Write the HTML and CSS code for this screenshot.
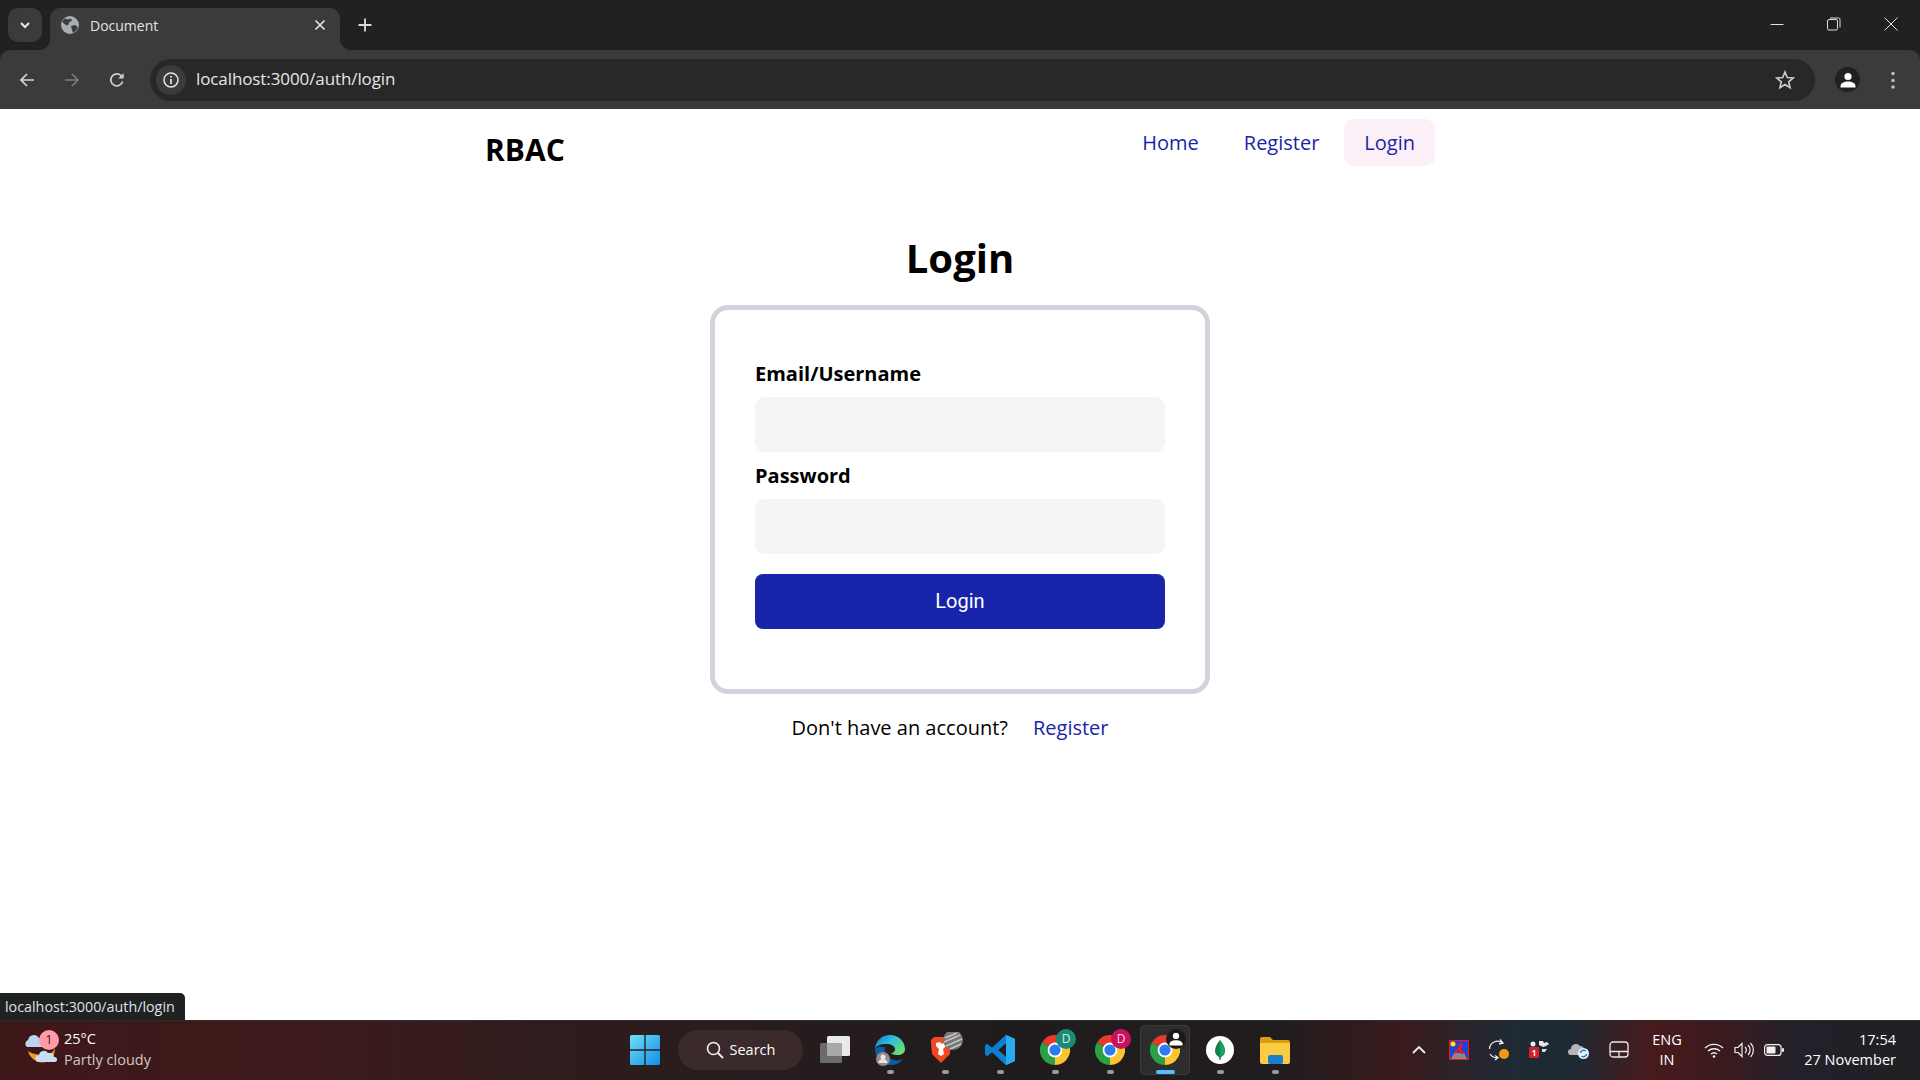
FILE: index.html
```html
<!DOCTYPE html>
<html lang="en">
<head>
<meta charset="utf-8">
<title>Document</title>
<link rel="stylesheet" href="styles.css">
</head>
<body>
<svg class="defs" width="0" height="0" aria-hidden="true">
  <defs>
    <symbol id="chrome" viewBox="0 0 30 30">
      <path d="M15 15L28 7.5A15 15 0 0 0 2 7.5Z" fill="#e8392f"/>
      <path d="M15 15L2 7.5A15 15 0 0 0 15 30Z" fill="#2c9f49"/>
      <path d="M15 15L15 30A15 15 0 0 0 28 7.5Z" fill="#fbc52d"/>
      <circle cx="15" cy="15" r="7.4" fill="#fff"/>
      <circle cx="15" cy="15" r="5.6" fill="#2a7cf0"/>
    </symbol>
  </defs>
</svg>

<div class="browser-top">
<header class="tabstrip">
  <div class="tab-menu">
    <svg width="12" height="12" viewBox="0 0 12 12"><path d="M2 4l4 4 4-4" fill="none" stroke="#e8e8e8" stroke-width="2"/></svg>
  </div>
  <div class="tab">
    <svg class="favicon" width="18" height="18" viewBox="0 0 18 18"><circle cx="9" cy="9" r="9" fill="#a8adb3"/><path d="M4 2.5l3 1 3-1 1 2-3 2-1 3-3-1-3-3zM10 10l4-1 3 2-2 4-3 2-1-3z" fill="#3b3b3b"/></svg>
    <span class="tab-title">Document</span>
    <svg class="tab-close" width="12" height="12" viewBox="0 0 12 12"><path d="M1.5 1.5l9 9M10.5 1.5l-9 9" stroke="#e8e8e8" stroke-width="1.6"/></svg>
  </div>
  <svg class="new-tab" width="14" height="14" viewBox="0 0 14 14"><path d="M7 0.5v13M0.5 7h13" stroke="#dcdcdc" stroke-width="1.8"/></svg>
  <div class="window-controls">
    <svg width="14" height="14" viewBox="0 0 14 14"><path d="M0.5 7.5h13" stroke="#e0e0e0"/></svg>
    <svg width="14" height="14" viewBox="0 0 14 14"><rect x="0.5" y="2.5" width="10" height="10.5" rx="1.5" fill="none" stroke="#e0e0e0"/><path d="M3 1h8.5a1.5 1.5 0 0 1 1.5 1.5v8" fill="none" stroke="#e0e0e0"/></svg>
    <svg width="14" height="14" viewBox="0 0 14 14"><path d="M0.5 0.5l13 13M13.5 0.5l-13 13" stroke="#e0e0e0"/></svg>
  </div>
</header>

<nav class="toolbar">
  <div class="nav-buttons">
    <svg width="16" height="16" viewBox="0 0 16 16"><path d="M15 8H2M8 2L2 8l6 6" fill="none" stroke="#d8d8d8" stroke-width="1.7"/></svg>
    <svg width="16" height="16" viewBox="0 0 16 16"><path d="M1 8h13M8 2l6 6-6 6" fill="none" stroke="#7c7c7c" stroke-width="1.7"/></svg>
    <svg width="16" height="16" viewBox="0 0 16 16"><path d="M13.6 9.5A6 6 0 1 1 12 3.6L14 5.5" fill="none" stroke="#d0d0d0" stroke-width="1.7"/><path d="M14.6 1v5.4H9.2z" fill="#d0d0d0"/></svg>
  </div>
  <div class="omnibox">
    <span class="info-chip">
      <svg width="16" height="16" viewBox="0 0 16 16"><circle cx="8" cy="8" r="7" fill="none" stroke="#e6e6e6" stroke-width="1.5"/><path d="M8 7v5" stroke="#e6e6e6" stroke-width="1.7"/><circle cx="8" cy="4.7" r="1" fill="#e6e6e6"/></svg>
    </span>
    <span class="url">localhost:3000/auth/login</span>
    <svg class="star" width="20" height="20" viewBox="0 0 20 20"><path d="M10 2l2.3 5.5 5.9.5-4.5 3.9 1.4 5.8L10 14.6l-5.1 3.1 1.4-5.8L1.800 8l5.900-.5z" fill="none" stroke="#c8c8c8" stroke-width="1.700"/></svg>
  </div>
  <span class="avatar">
    <svg width="16" height="16" viewBox="0 0 16 16"><circle cx="8" cy="4.500" r="3.600" fill="#fff"/><path d="M0.500 15.500v-1.500c0-3 3.500-4.500 7.500-4.500s7.500 1.500 7.500 4.500v1.500z" fill="#fff"/></svg>
  </span>
  <svg class="menu-dots" width="6" height="18" viewBox="0 0 6 18"><circle cx="3" cy="2.500" r="1.800" fill="#bdbdbd"/><circle cx="3" cy="9.500" r="1.800" fill="#bdbdbd"/><circle cx="3" cy="16" r="1.800" fill="#bdbdbd"/></svg>
</nav>
</div>

<main class="page">
  <div class="site-header">
    <div class="brand">RBAC</div>
    <ul class="site-nav">
      <li><a class="site-link">Home</a></li>
      <li><a class="site-link">Register</a></li>
      <li><a class="site-link is-active">Login</a></li>
    </ul>
  </div>
  <h1 class="page-title">Login</h1>
  <form class="card">
    <label class="field-label">Email/Username</label>
    <div class="field"></div>
    <label class="field-label">Password</label>
    <div class="field"></div>
    <div class="submit">Login</div>
  </form>
  <p class="alt-line"><span>Don't have an account?</span><a class="alt-link">Register</a></p>
  <div class="status-bubble">localhost:3000/auth/login</div>
</main>

<footer class="taskbar">
  <div class="weather">
    <span class="weather-icon">
      <svg width="34" height="30" viewBox="0 0 34 30">
        <path d="M4 16C6 24 14 29 22 27 28 25 31 20 31 13 29 19 22 21 16 20 10 19 7 18 4 16Z" fill="#f59b23"/>
        <path d="M3 12a4 4 0 0 1 1-7 6 6 0 0 1 11-2 5 5 0 0 1 7 5 2 2 0 0 1 0 4z" fill="#bcd4f2"/>
        <path d="M15 27a3.500 3.500 0 0 1 0-7 5 5 0 0 1 9-2 4.500 4.500 0 0 1 6 4 2.500 2.500 0 0 1 1 5z" fill="#c9dcf5"/>
      </svg>
      <span class="weather-badge">1</span>
    </span>
    <span class="weather-text">
      <span class="weather-temp">25°C</span>
      <span class="weather-desc">Partly cloudy</span>
    </span>
  </div>

  <div class="apps">
    <div class="app">
      <svg width="30" height="30" viewBox="0 0 30 30">
        <defs><linearGradient id="win" x1="0" y1="0" x2="1" y2="1"><stop offset="0" stop-color="#6fe0f5"/><stop offset="1" stop-color="#0f8fe8"/></linearGradient></defs>
        <path d="M0 1.500A1.500 1.500 0 0 1 1.500 0H14.300V14.300H0zM15.700 0H28.500A1.500 1.500 0 0 1 30 1.500V14.300H15.700zM0 15.700H14.300V30H1.500A1.500 1.500 0 0 1 0 28.500zM15.700 15.700H30V28.500A1.500 1.500 0 0 1 28.500 30H15.700z" fill="url(#win)"/>
      </svg>
    </div>
    <div class="search-pill">
      <svg width="18" height="18" viewBox="0 0 18 18"><circle cx="7.500" cy="7.500" r="6" fill="none" stroke="#f0f0f0" stroke-width="1.600"/><path d="M12 12l5 5" stroke="#f0f0f0" stroke-width="1.800"/></svg>
      <span>Search</span>
    </div>
    <div class="app">
      <svg width="30" height="30" viewBox="0 0 30 30"><rect x="0" y="8" width="22" height="20" rx="1.500" fill="#6b6b6b"/><rect x="7" y="1" width="23" height="20" rx="1.500" fill="#e9e9e9"/><rect x="7" y="8" width="15" height="13" fill="#a8a8a8"/></svg>
    </div>
    <div class="app has-dot">
      <svg width="32" height="32" viewBox="0 0 32 32">
        <defs><linearGradient id="edge" x1="0" y1="0" x2="1" y2="0.700"><stop offset="0" stop-color="#1277c9"/><stop offset="0.500" stop-color="#30c0d8"/><stop offset="1" stop-color="#6ce06a"/></linearGradient></defs>
        <path d="M1 15C2 6 8 1 16 1c9 0 15 7 15 14 0 4-3 6-8 6-3 0-5-1-6-2 3 0 4-2 4-4 0-3-4-5-9-5C6 10 2 12 1 15Z" fill="url(#edge)"/>
        <path d="M1 15c0 9 7 16 15 16 6 0 10-2 13-6-4 2-10 2-14-1-4-3-5-7-4-11-5 0-9 0-10 2Z" fill="#0c5ea8"/>
        <circle cx="9" cy="25" r="7" fill="#8d8d8d"/><circle cx="9" cy="23" r="2.500" fill="#e6e6e6"/><path d="M4.500 29c0-3 2-4 4.500-4s4.500 1 4.500 4z" fill="#e6e6e6"/>
      </svg>
    </div>
    <div class="app has-dot">
      <svg width="36" height="36" viewBox="0 0 36 36">
        <path d="M4 8l3-3h11l3 3 3 0-1 14-9 9-9-9-1-11z" fill="#f0491f"/>
        <path d="M9 11l4-1 2 2 3-2 1 4-3 3 1 5-3 2-3-2 1-5-3-3z" fill="#fff"/>
        <circle cx="26" cy="8" r="10" fill="#777"/>
        <path d="M18 6l12-5M17 10l16-7M19 14l16-7M23 17l11-5" stroke="#c4c4c4" stroke-width="1.500"/>
      </svg>
    </div>
    <div class="app has-dot">
      <svg width="30" height="30" viewBox="0 0 30 30">
        <path d="M21 0L30 4V26L21 30L7 17L2 21L0 19V11L2 9L7 13ZM21 8L13 15L21 22Z" fill="#1c9be8"/>
        <path d="M21 0L30 4V26L21 30Z" fill="#28a9f0"/>
        <path d="M21 8L13 15L21 22V30L7 17L2 21L0 19V11L2 9L7 13L21 0Z" fill="#0b7fd0"/>
      </svg>
    </div>
    <div class="app has-dot">
      <svg class="chrome" width="30" height="30"><use href="#chrome"/></svg>
      <span class="profile-badge is-teal">D</span>
    </div>
    <div class="app has-dot">
      <svg class="chrome" width="30" height="30"><use href="#chrome"/></svg>
      <span class="profile-badge is-pink">D</span>
    </div>
    <div class="app is-current">
      <svg class="chrome" width="30" height="30"><use href="#chrome"/></svg>
      <span class="profile-badge is-dark">
        <svg width="14" height="14" viewBox="0 0 16 16"><circle cx="8" cy="4.500" r="3.600" fill="#fff"/><path d="M0.500 15.500v-1.500c0-3 3.500-4.500 7.500-4.500s7.500 1.500 7.500 4.500v1.500z" fill="#fff"/></svg>
      </span>
    </div>
    <div class="app has-dot">
      <svg width="30" height="30" viewBox="0 0 30 30"><circle cx="15" cy="15" r="14" fill="#fff"/><path d="M15 5c3 4 5 7 5 11 0 3-2 5-4 6l-.5 3h-1l-.5-3c-2-1-4-3-4-6 0-4 2-7 5-11z" fill="#12804a"/><path d="M15 5c3 4 5 7 5 11 0 3-2 5-4 6l-1 3z" fill="#1aa35c"/></svg>
    </div>
    <div class="app has-dot">
      <svg width="32" height="30" viewBox="0 0 32 30"><path d="M1 4a2 2 0 0 1 2-2h8l3 3h15a2 2 0 0 1 2 2v3H1z" fill="#d99e12"/><path d="M1 8h30v19a2 2 0 0 1-2 2H3a2 2 0 0 1-2-2z" fill="#fbcb43"/><rect x="9" y="20" width="15" height="9" rx="2" fill="#1a7fc8"/></svg>
    </div>
  </div>

  <div class="tray">
    <span class="tray-item tray-chevron"><svg width="14" height="10" viewBox="0 0 14 10"><path d="M1 8l6-6 6 6" fill="none" stroke="#f0f0f0" stroke-width="1.800"/></svg></span>
    <span class="tray-item"><svg width="20" height="20" viewBox="0 0 20 20"><rect x="0.500" y="0.500" width="19" height="19" fill="#2340d8" stroke="#ff1010"/><circle cx="4" cy="4" r="2.500" fill="#ffe600"/><path d="M2 19l3-6h10l3 6z" fill="#888"/><path d="M11 3l3 2-2 4 3 4-2 2-3-5-4 4-1-2 4-4z" fill="#f01818"/></svg></span>
    <span class="tray-item"><svg width="22" height="22" viewBox="0 0 22 22"><path d="M1.500 10a8 8 0 0 1 13-6M12 0.500l3 3.500-4 1M2 15c2 3 5 4 8 3.500M7 21l3-2.500-3-2" fill="none" stroke="#ececec" stroke-width="1.300"/><circle cx="16" cy="15" r="5" fill="#f5970f"/></svg></span>
    <span class="tray-item"><svg width="20" height="20" viewBox="0 0 20 20"><rect x="0" y="7" width="10" height="11" rx="1" fill="#d3202a"/><text class="tray-num" x="5" y="16">1</text><circle cx="4" cy="4" r="2.500" fill="#eee"/><path d="M10 1h4l1 2 3-1 2 2-3 2-3 1-4-2z" fill="#e8e8e8"/><path d="M13 9h5l-2 3h-3z" fill="#ddd"/></svg></span>
    <span class="tray-item"><svg width="22" height="20" viewBox="0 0 22 20"><path d="M3 15a3 3 0 0 1 0-6 5 5 0 0 1 9-3 4 4 0 0 1 4 4 3 3 0 0 1 0 5z" fill="#b4b8bd"/><circle cx="15.500" cy="13.500" r="5.500" fill="#e8f2fa"/><path d="M12.500 13a3 3 0 0 1 5-2M18.500 14a3 3 0 0 1-5 2" fill="none" stroke="#1a82d8" stroke-width="1.500"/></svg></span>
    <span class="tray-item"><svg width="20" height="18" viewBox="0 0 20 18"><rect x="1" y="1" width="18" height="15" rx="3" fill="none" stroke="#e8e8e8" stroke-width="1.300"/><path d="M1 10.500h18M10 10.500V16" stroke="#e8e8e8" stroke-width="1.300"/></svg></span>
    <span class="tray-lang"><span>ENG</span><span>IN</span></span>
    <span class="tray-status">
      <svg width="20" height="16" viewBox="0 0 20 16"><path d="M1 6a13 13 0 0 1 18 0M4 9a9 9 0 0 1 12 0M7 12a4.500 4.500 0 0 1 6 0" fill="none" stroke="#f0f0f0" stroke-width="1.400"/><circle cx="10" cy="14.500" r="1.300" fill="#f0f0f0"/></svg>
      <svg width="20" height="16" viewBox="0 0 20 16"><path d="M1 5.500h3l4-4v13l-4-4H1z" fill="none" stroke="#f0f0f0" stroke-width="1.200"/><path d="M11 5a4 4 0 0 1 0 6M14 3a7 7 0 0 1 0 10M16.500 1a10 10 0 0 1 0 14" fill="none" stroke="#f0f0f0" stroke-width="1.200"/></svg>
      <svg width="20" height="12" viewBox="0 0 20 12"><rect x="0.600" y="0.600" width="16.500" height="10.800" rx="3" fill="none" stroke="#f0f0f0" stroke-width="1.200"/><rect x="2.500" y="2.500" width="9" height="7" rx="1" fill="#f0f0f0"/><rect x="18" y="4" width="2" height="4" rx="1" fill="#f0f0f0"/></svg>
    </span>
    <span class="clock"><span>17:54</span><span>27 November</span></span>
  </div>
</footer>
</body>
</html>
```

FILE: styles.css
```css
* { box-sizing: border-box; }

html, body { height: 100%; }

body {
  margin: 0;
  display: flex;
  flex-direction: column;
  overflow: hidden;
  font-family: "Open Sans", "Noto Sans", sans-serif;
  background: #fff;
  color: #000;
}

.defs { display: none; }

.browser-top {
  flex: none;
  background: #202222;
}

/* Browser tab strip */
.tabstrip {
  height: 50px;
  display: flex;
  align-items: flex-end;
  padding-left: 8px;
}

.tab-menu {
  width: 34px;
  height: 34px;
  margin-bottom: 8px;
  border-radius: 10px;
  background: #3b3b3b;
  display: flex;
  align-items: center;
  justify-content: center;
}

.tab {
  width: 290px;
  height: 42px;
  margin-left: 8px;
  padding: 0 14px 8px 11px;
  background: #3b3b3b;
  border-radius: 10px 10px 0 0;
  display: flex;
  align-items: center;
  position: relative;
}

.tab::before, .tab::after {
  content: "";
  position: absolute;
  bottom: 0;
  width: 10px;
  height: 10px;
  background: radial-gradient(circle at var(--cx) 0, #202222 9.500px, #3b3b3b 10px);
}
.tab::before { left: -10px; --cx: 0; }
.tab::after { right: -10px; --cx: 100%; }

.favicon { flex: none; }

.tab-title {
  margin-left: 11px;
  flex: 1;
  font-size: 14px;
  color: #e2e2e2;
}

.tab-close { flex: none; }

.new-tab { margin: 0 0 18px 18px; flex: none; }

.window-controls {
  margin-left: auto;
  height: 50px;
  padding: 0 22px 2px 0;
  display: flex;
  gap: 43px;
  align-items: center;
}

/* Browser toolbar */
.toolbar {
  height: 59px;
  display: flex;
  align-items: center;
  padding: 0 24px 0 19px;
  background: #3b3b3b;
  border-radius: 10px 10px 0 0;
}

.nav-buttons {
  display: flex;
  gap: 29px;
  align-items: center;
  width: 131px;
  flex: none;
}

.omnibox {
  flex: 1;
  height: 42px;
  border-radius: 21px;
  background: #282828;
  display: flex;
  align-items: center;
  padding: 0 20px 0 6px;
}

.info-chip {
  width: 30px;
  height: 30px;
  border-radius: 50%;
  background: #3b3b3b;
  display: flex;
  align-items: center;
  justify-content: center;
  flex: none;
}

.url {
  margin-left: 10px;
  font-size: 17px;
  letter-spacing: -0.1px;
  line-height: 23px;
  margin-bottom: 2px;
  color: #e6e6e6;
}

.star { margin-left: auto; }

.avatar {
  width: 25px;
  height: 25px;
  margin-left: 20px;
  border-radius: 50%;
  background: #202020;
  display: flex;
  align-items: center;
  justify-content: center;
  flex: none;
}

.menu-dots { margin-left: 30px; flex: none; }

/* Page */
.page {
  flex: 1;
  position: relative;
  display: flex;
  flex-direction: column;
  align-items: center;
  min-height: 0;
}

.site-header {
  width: 960px;
  padding: 10px 5px 0 5px;
  display: flex;
  justify-content: space-between;
  align-items: flex-start;
}

.brand {
  font-size: 30px;
  font-weight: 700;
  line-height: 41px;
  margin-top: 10px;
}

.site-nav {
  list-style: none;
  margin: 0;
  padding: 0;
  display: flex;
  gap: 5px;
}

.site-link {
  display: block;
  padding: 10px 20px;
  font-size: 20px;
  line-height: 27px;
  color: #1825ab;
  border-radius: 10px;
}

.site-link.is-active { background: #fcf0f8; }

.page-title {
  margin: 61px 0 20px;
  font-size: 40px;
  font-weight: 700;
  line-height: 54px;
}

.card {
  width: 500px;
  padding: 40px 40px 60px;
  border: 5px solid #d1d5db;
  border-radius: 18px;
  display: flex;
  flex-direction: column;
}

.field-label {
  padding: 10px 0;
  font-size: 20px;
  font-weight: 700;
  line-height: 27px;
}

.field {
  height: 55px;
  border-radius: 10px;
  background: #f3f4f6;
}

.submit {
  height: 55px;
  margin-top: 20px;
  padding-bottom: 1px;
  border-radius: 8px;
  background: #1825ab;
  color: #fff;
  font-family: Roboto, "Liberation Sans", sans-serif;
  font-size: 20px;
  display: flex;
  align-items: center;
  justify-content: center;
}

.alt-line {
  margin: 20px 0 0;
  padding-right: 20px;
  display: flex;
  gap: 25px;
  font-size: 20px;
  line-height: 27px;
}

.alt-link { color: #1825ab; }

.status-bubble {
  position: absolute;
  left: 0;
  bottom: 0;
  width: 185px;
  height: 27px;
  padding-left: 5px;
  background: #202222;
  border-top-right-radius: 5px;
  color: #dfe3e6;
  font-size: 14.300px;
  line-height: 27px;
  white-space: nowrap;
}

/* Windows taskbar */
.taskbar {
  height: 60px;
  flex: none;
  display: flex;
  align-items: center;
  padding-bottom: 2px;
  color: #fff;
  border-top: 1px solid #2c2c2c;
  background: linear-gradient(90deg,
    #3e1719 0, #3d1a1b 300px, #2c1c1d 620px, #201c1e 1000px,
    #211c1e 1280px, #3a1a1c 1400px, #1f2a34 1510px, #1d2a33 1570px,
    #481a1c 1650px, #3b1a1e 1720px, #21212a 1800px, #1f2022 1920px);
}

.weather {
  width: 620px;
  flex: none;
  display: flex;
  align-items: center;
  padding-left: 24px;
}

.weather-icon {
  position: relative;
  width: 34px;
  height: 30px;
  flex: none;
  display: block;
}

.weather-badge {
  position: absolute;
  left: 15px;
  top: -5px;
  width: 20px;
  height: 20px;
  border-radius: 50%;
  background: #ff9aa6;
  color: #222;
  font-size: 12px;
  line-height: 20px;
  text-align: center;
}

.weather-text {
  margin: 0 0 1px 6px;
  display: flex;
  flex-direction: column;
  font-size: 14.500px;
  line-height: 21px;
}

.weather-desc { color: #d0c8c8; }

.apps {
  display: flex;
  align-items: center;
  gap: 5px;
}

.app {
  position: relative;
  width: 50px;
  height: 50px;
  flex: none;
  display: flex;
  align-items: center;
  justify-content: center;
  border-radius: 5px;
}

.has-dot::after, .is-current::after {
  content: "";
  position: absolute;
  bottom: 1px;
  left: 50%;
  width: 7px;
  height: 4px;
  margin-left: -3.500px;
  border-radius: 2px;
  background: #9a9a9a;
}

.is-current {
  background: #2e2d2e;
  box-shadow: inset 0 0 0 1px #3a3a3a;
}

.is-current::after {
  width: 19px;
  margin-left: -9.500px;
  background: #4cc2ff;
}

.search-pill {
  width: 125px;
  height: 40px;
  margin: 0 2px 0 3px;
  border-radius: 20px;
  background: #3a2a2b;
  display: flex;
  align-items: center;
  justify-content: center;
  gap: 6px;
  font-size: 14.500px;
  flex: none;
}

.chrome { display: block; }

.profile-badge {
  position: absolute;
  right: 4px;
  top: 4px;
  width: 20px;
  height: 20px;
  border-radius: 50%;
  display: flex;
  align-items: center;
  justify-content: center;
  font-size: 12px;
}

.is-teal { background: #188a78; color: #d8f0e8; }
.is-pink { background: #c8125f; color: #fbd8e8; }
.is-dark { background: #1a1a1a; }

.tray {
  margin-left: auto;
  padding-right: 24px;
  display: flex;
  align-items: center;
}

.tray-item {
  width: 40px;
  height: 40px;
  display: flex;
  align-items: center;
  justify-content: center;
  flex: none;
}

.tray-num { font-size: 8px; font-weight: 700; fill: #fff; text-anchor: middle; }

.tray-lang {
  width: 58px;
  margin-left: -1px;
  display: flex;
  flex-direction: column;
  align-items: center;
  font-size: 14.500px;
  line-height: 20px;
}

.tray-status {
  margin-left: 8px;
  display: flex;
  align-items: center;
  gap: 10px;
}

.clock {
  margin-left: 16px;
  width: 96px;
  display: flex;
  flex-direction: column;
  align-items: flex-end;
  font-size: 14.500px;
  line-height: 20px;
  white-space: nowrap;
}
```
